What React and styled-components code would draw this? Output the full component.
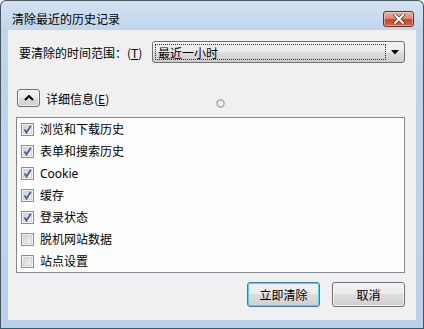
import React from 'react';
import styled, { createGlobalStyle } from 'styled-components';

const GlobalStyle = createGlobalStyle`
  html, body {
    margin: 0;
    padding: 0;
    background: #ffffff;
  }
  body {
    font-family: "Noto Sans", "Noto Sans CJK SC", sans-serif;
    font-size: 12px;
    color: #000;
  }
`;

const Window = styled.div`
  width: 424px;
  height: 329px;
  box-sizing: border-box;
  border: 1px solid #4a5562;
  border-bottom-color: #2f5f6b;
  border-radius: 6px 6px 0 0;
  background: linear-gradient(#d3e2f2 0px, #bfd5ec 30px, #b9d1ea 100%);
  display: flex;
  flex-direction: column;
  overflow: hidden;
`;

const TitleBar = styled.div`
  height: 29px;
  box-sizing: border-box;
  padding: 7px 9px 0 11px;
  display: flex;
  align-items: center;
  justify-content: space-between;
  flex-shrink: 0;
`;

const Title = styled.div`
  font-family: "Noto Sans CJK SC", sans-serif;
  font-size: 12px;
  line-height: 22px;
  color: #000;
`;

const CloseButton = styled.div`
  width: 31px;
  height: 16px;
  box-sizing: border-box;
  border: 1px solid #6b2c22;
  border-radius: 3px;
  background: linear-gradient(#eab0a2 0%, #de8a76 45%, #c9452b 55%, #d2643f 100%);
  box-shadow: inset 0 0 0 1px rgba(255, 220, 210, 0.5);
  display: flex;
  align-items: center;
  justify-content: center;
`;

const Client = styled.div`
  position: relative;
  flex: 1;
  margin: 0 7px 8px 7px;
  background: #f0f0f0;
  padding: 11px 11px 0 8px;
  display: flex;
  flex-direction: column;
`;

const RangeRow = styled.div`
  display: flex;
  align-items: center;
  height: 22px;
`;

const Label = styled.div`
  width: 136px;
  box-sizing: border-box;
  padding-left: 3px;
  font-family: "Noto Sans CJK SC", sans-serif;
  white-space: nowrap;
`;

const Select = styled.div`
  position: relative;
  flex: 1;
  height: 22px;
  box-sizing: border-box;
  border: 1px solid #707070;
  border-radius: 3px;
  background: linear-gradient(#f2f2f2 0%, #ebebeb 50%, #dddddd 50%, #cfcfcf 100%);
  display: flex;
  align-items: center;
  padding: 2px 18px 2px 2px;
`;

const FocusRect = styled.div`
  flex: 1;
  height: 100%;
  box-sizing: border-box;
  border: 1px dotted #303030;
  display: flex;
  align-items: center;
  padding-left: 2px;
  font-family: "Noto Sans CJK SC", sans-serif;
`;

const Arrow = styled.svg`
  position: absolute;
  right: 5px;
  top: 8px;
`;

const DetailsRow = styled.div`
  display: flex;
  align-items: center;
  margin-top: 26px;
  padding-left: 1px;
  gap: 6px;
`;

const ToggleButton = styled.div`
  width: 23px;
  height: 18px;
  box-sizing: border-box;
  border: 1px solid #707070;
  border-radius: 3px;
  background: linear-gradient(#f2f2f2 0%, #ebebeb 50%, #dddddd 50%, #cfcfcf 100%);
  box-shadow: inset 0 0 0 1px rgba(255, 255, 255, 0.6);
  display: flex;
  align-items: center;
  justify-content: center;
`;

const DetailsLabel = styled.div`
  font-family: "Noto Sans CJK SC", sans-serif;
`;

const BusyCursor = styled.svg`
  position: absolute;
  left: 208px;
  top: 69px;
`;

const ItemList = styled.div`
  margin-top: 10px;
  border: 1px solid #828790;
  background: #fdfdfd;
  display: flex;
  flex-direction: column;
`;

const Item = styled.div`
  height: 22px;
  display: flex;
  align-items: center;
  padding-left: 4px;
  gap: 6px;
  font-family: "Noto Sans", "Noto Sans CJK SC", sans-serif;
`;

const ButtonRow = styled.div`
  margin-top: 9px;
  display: flex;
  justify-content: flex-end;
  gap: 12px;
`;

const DialogButton = styled.div`
  width: 73px;
  height: 25px;
  box-sizing: border-box;
  border: 1px solid ${(p) => (p.$default ? '#3c7fb1' : '#707070')};
  border-radius: 3px;
  background: linear-gradient(#f2f2f2 0%, #ebebeb 50%, #dddddd 50%, #cfcfcf 100%);
  box-shadow: ${(p) =>
    p.$default ? 'inset 0 0 0 1px #48d5f8' : 'inset 0 0 0 1px rgba(255,255,255,0.7)'};
  display: flex;
  align-items: center;
  justify-content: center;
  font-family: "Noto Sans CJK SC", sans-serif;
`;

const CheckBox = ({ checked }) => (
  <svg width="13" height="13" viewBox="0 0 13 13">
    <defs>
      <linearGradient id="cbFill" x1="0" y1="0" x2="1" y2="1">
        <stop offset="0" stopColor="#cbcfd5" />
        <stop offset="1" stopColor="#f7f7f7" />
      </linearGradient>
    </defs>
    <rect x="0.5" y="0.5" width="12" height="12" fill="#f4f4f4" stroke="#8f8f8f" />
    <rect x="2.5" y="2.5" width="8" height="8" fill="url(#cbFill)" stroke="#d2d4d8" />
    {checked && (
      <path d="M3.5 6.5 L5.5 9.5 L9.8 2.8" fill="none" stroke="#4a5f97" strokeWidth="1.8" />
    )}
  </svg>
);

const items = [
  { label: '浏览和下载历史', checked: true },
  { label: '表单和搜索历史', checked: true },
  { label: 'Cookie', checked: true },
  { label: '缓存', checked: true },
  { label: '登录状态', checked: true },
  { label: '脱机网站数据', checked: false },
  { label: '站点设置', checked: false },
];

export default function App() {
  return (
    <>
      <GlobalStyle />
      <Window>
        <TitleBar>
          <Title>清除最近的历史记录</Title>
          <CloseButton>
            <svg width="12" height="10" viewBox="0 0 12 10">
              <path d="M2 1 L10 9 M10 1 L2 9" stroke="#4a3a38" strokeWidth="3.4" strokeLinecap="square" />
              <path d="M2 1 L10 9 M10 1 L2 9" stroke="#ffffff" strokeWidth="2" strokeLinecap="square" />
            </svg>
          </CloseButton>
        </TitleBar>
        <Client>
          <RangeRow>
            <Label>
              要清除的时间范围：(<u>T</u>)
            </Label>
            <Select>
              <FocusRect>最近一小时</FocusRect>
              <Arrow width="8" height="5" viewBox="0 0 8 5">
                <path d="M0 0 H8 L4 4.5 Z" fill="#000" />
              </Arrow>
            </Select>
          </RangeRow>
          <DetailsRow>
            <ToggleButton>
              <svg width="10" height="6" viewBox="0 0 10 6">
                <path d="M1 5 L5 1 L9 5" fill="none" stroke="#000" strokeWidth="2" />
              </svg>
            </ToggleButton>
            <DetailsLabel>
              详细信息(<u>E</u>)
            </DetailsLabel>
          </DetailsRow>
          <BusyCursor width="9" height="9" viewBox="0 0 9 9">
            <circle cx="4.5" cy="4.5" r="3.6" fill="none" stroke="#9a9aa6" strokeWidth="1.2" />
          </BusyCursor>
          <ItemList>
            {items.map((it) => (
              <Item key={it.label}>
                <CheckBox checked={it.checked} />
                <span>{it.label}</span>
              </Item>
            ))}
          </ItemList>
          <ButtonRow>
            <DialogButton $default>立即清除</DialogButton>
            <DialogButton>取消</DialogButton>
          </ButtonRow>
        </Client>
      </Window>
    </>
  );
}
